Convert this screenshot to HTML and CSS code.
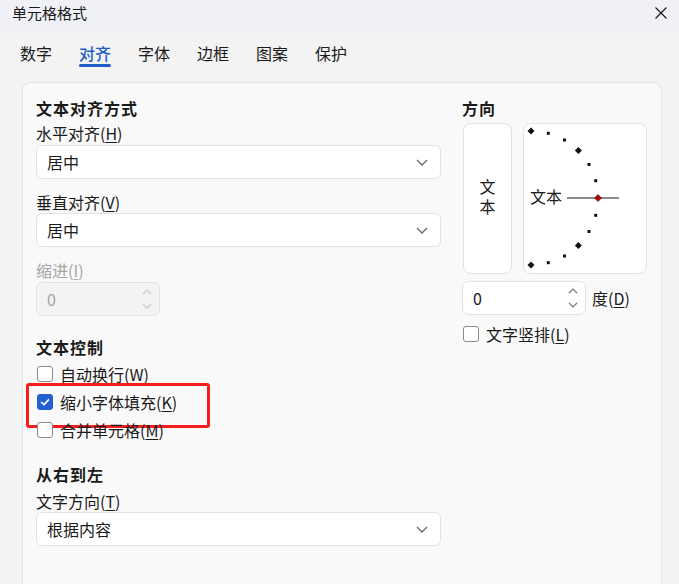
FILE: index.html
```html
<!DOCTYPE html>
<html lang="zh-CN">
<head>
    <meta charset="UTF-8">
    <title>单元格格式</title>
    <link rel="stylesheet" href="styles.css">
</head>
<body>
    <div class="dialog">
        <div class="dlg-title">
            <span>单元格格式</span>
            <svg class="dlg-close" width="12" height="12" viewBox="0 0 12 12">
                <path d="M0.5 0.5L11.5 11.5M11.5 0.5L0.5 11.5" stroke="#1a1a1a" stroke-width="1.2" fill="none"/>
            </svg>
        </div>
        <ul class="tabs">
            <li>数字</li>
            <li class="tab-on">对齐</li>
            <li>字体</li>
            <li>边框</li>
            <li>图案</li>
            <li>保护</li>
        </ul>
        <div class="panel">
            <div class="col-left">
                <h3 class="sec">文本对齐方式</h3>
                <p class="lbl lbl-first">水平对齐(<u>H</u>)</p>
                <div class="select">
                    <span>居中</span>
                    <svg width="12" height="7" viewBox="0 0 12 7"><path d="M1 1L6 6L11 1" stroke="#666" stroke-width="1.3" fill="none"/></svg>
                </div>
                <p class="lbl">垂直对齐(<u>V</u>)</p>
                <div class="select">
                    <span>居中</span>
                    <svg width="12" height="7" viewBox="0 0 12 7"><path d="M1 1L6 6L11 1" stroke="#666" stroke-width="1.3" fill="none"/></svg>
                </div>
                <p class="lbl lbl-off">缩进(<u>I</u>)</p>
                <div class="spin spin-off">
                    <span>0</span>
                    <svg width="10" height="20" viewBox="0 0 10 20"><path d="M1 5L5 1L9 5M1 15L5 19L9 15" stroke="#c8c8c8" stroke-width="1.2" fill="none"/></svg>
                </div>

                <h3 class="sec sec-gap">文本控制</h3>
                <div class="checks">
                    <label class="chk"><i class="box"></i>自动换行(<u>W</u>)</label>
                    <label class="chk chk-mark">
                        <i class="box box-on">
                            <svg width="10" height="8" viewBox="0 0 10 8"><path d="M1 4L4 6.6L9 1.4" stroke="#fff" stroke-width="1.6" fill="none"/></svg>
                        </i>缩小字体填充(<u>K</u>)
                    </label>
                    <label class="chk"><i class="box"></i>合并单元格(<u>M</u>)</label>
                </div>

                <h3 class="sec sec-gap2">从右到左</h3>
                <p class="lbl lbl-first2">文字方向(<u>T</u>)</p>
                <div class="select">
                    <span>根据内容</span>
                    <svg width="12" height="7" viewBox="0 0 12 7"><path d="M1 1L6 6L11 1" stroke="#666" stroke-width="1.3" fill="none"/></svg>
                </div>
            </div>

            <div class="col-right">
                <h3 class="sec">方向</h3>
                <div class="orient">
                    <div class="vert-box">
                        <span class="vert-txt">文本</span>
                    </div>
                    <div class="dial-box">
                        <svg width="122" height="149" viewBox="0 0 122 149">
                            <text x="6" y="79" class="dial-txt">文本</text>
                            <line x1="43" y1="74" x2="95" y2="74" stroke="#8c8c8c" stroke-width="2"/>
                            <g fill="#111">
                                <polygon points="7,3.5 10.5,7 7,10.5 3.5,7"/>
                                <rect x="22.8" y="7.8" width="3" height="3"/>
                                <rect x="39" y="14.5" width="3" height="3"/>
                                <polygon points="54.4,23.1 57.9,26.6 54.4,30.1 50.9,26.6"/>
                                <rect x="63.5" y="39" width="3" height="3"/>
                                <rect x="70.2" y="55.2" width="3" height="3"/>
                                <rect x="70.2" y="89.8" width="3" height="3"/>
                                <rect x="63.5" y="106" width="3" height="3"/>
                                <polygon points="54.4,117.9 57.9,121.4 54.4,124.9 50.9,121.4"/>
                                <rect x="39" y="130.5" width="3" height="3"/>
                                <rect x="22.8" y="137.2" width="3" height="3"/>
                                <polygon points="7,137.5 10.5,141 7,144.5 3.5,141"/>
                            </g>
                            <polygon points="74,70.5 77.5,74 74,77.5 70.5,74" fill="#c00000" stroke="#222" stroke-width="0.6"/>
                        </svg>
                    </div>
                </div>
                <div class="deg-row">
                    <div class="spin">
                        <span>0</span>
                        <svg width="10" height="20" viewBox="0 0 10 20"><path d="M1 5L5 1L9 5M1 15L5 19L9 15" stroke="#777" stroke-width="1.2" fill="none"/></svg>
                    </div>
                    <span class="deg-lbl">度(<u>D</u>)</span>
                </div>
                <label class="chk chk-vert"><i class="box"></i>文字竖排(<u>L</u>)</label>
            </div>
        </div>
    </div>
</body>
</html>
```

FILE: styles.css
```css
* {
    box-sizing: border-box;
}

html, body {
    margin: 0;
    height: 100%;
    overflow: hidden;
}

body {
    font-family: "Noto Sans CJK SC", "Noto Sans", sans-serif;
    font-size: 16px;
    color: #1a1a1a;
    background-color: #f3f3f3;
}

p, h3, ul {
    margin: 0;
    padding: 0;
}

u {
    text-underline-offset: 2px;
}

.dialog {
    width: 679px;
    height: 584px;
}

.dlg-title {
    display: flex;
    justify-content: space-between;
    align-items: flex-start;
    height: 31px;
    padding: 3px 12px 0 12px;
    line-height: 20px;
    font-size: 15px;
    background-color: #eff1f6;
}

.dlg-close {
    margin-top: 4px;
}

.tabs {
    display: flex;
    gap: 27px;
    padding: 12px 0 0 20px;
    list-style: none;
}

.tabs>li {
    position: relative;
    padding-bottom: 4px;
    line-height: 20px;
    font-size: 16px;
    color: #1a1a1a;
}

.tabs>.tab-on {
    color: #1f5dc9;
    font-weight: 500;
}

.tabs>.tab-on:after {
    content: "";
    position: absolute;
    left: 0;
    right: 0;
    bottom: 0;
    height: 3px;
    border-radius: 2px;
    background-color: #1f5dc9;
}

.panel {
    display: flex;
    gap: 21px;
    height: 530px;
    margin: 15px 17px 0 22px;
    padding: 15px 13px 0;
    border: 1px solid #e4e4e4;
    border-radius: 8px;
    background-color: #f9f9f9;
}

.col-left {
    width: 405px;
}

.col-right {
    width: 185px;
}

.sec {
    line-height: 20px;
    font-size: 16px;
    font-weight: bold;
    letter-spacing: 1px;
}

.sec-gap {
    margin-top: 21px;
}

.sec-gap2 {
    margin-top: 20px;
}

.lbl {
    margin-top: 13px;
    line-height: 20px;
}

.lbl-first {
    margin-top: 5px;
}

.lbl-first2 {
    margin-top: 7px;
}

.lbl-off {
    color: #a6a6a6;
}

.select {
    display: flex;
    justify-content: space-between;
    align-items: center;
    height: 34px;
    margin-top: 1px;
    padding: 0 12px 0 10px;
    border: 1px solid #e2e2e2;
    border-radius: 6px;
    background-color: #fff;
}

.lbl-first + .select {
    margin-top: 2px;
}

.spin {
    display: flex;
    justify-content: space-between;
    align-items: center;
    width: 124px;
    height: 34px;
    padding: 0 7px 0 10px;
    border: 1px solid #e2e2e2;
    border-radius: 6px;
    background-color: #fff;
}

.spin-off {
    margin-top: 2px;
    color: #a6a6a6;
    background-color: #f3f3f3;
}

.checks {
    margin-top: 3px;
}

.chk {
    position: relative;
    display: flex;
    align-items: center;
    height: 28px;
}

.box {
    display: flex;
    justify-content: center;
    align-items: center;
    width: 16px;
    height: 16px;
    margin: 0 7px 0 1px;
    border: 1px solid #8a8a8a;
    border-radius: 3px;
    background-color: #fff;
}

.box-on {
    border-color: #235fcf;
    background-color: #235fcf;
}

.chk-mark:after {
    content: "";
    position: absolute;
    top: -5px;
    left: -10px;
    width: 178px;
    height: 39px;
    border: 3px solid #f51d1d;
    border-radius: 3px;
}

.orient {
    display: flex;
    gap: 11px;
    height: 151px;
    margin-top: 5px;
}

.vert-box {
    display: flex;
    justify-content: center;
    align-items: center;
    width: 50px;
    margin-left: 1px;
    border: 1px solid #e2e2e2;
    border-radius: 8px;
    background-color: #fff;
}

.vert-txt {
    writing-mode: vertical-rl;
    letter-spacing: 4px;
    line-height: 20px;
}

.dial-box {
    width: 124px;
    border: 1px solid #e2e2e2;
    border-radius: 8px;
    background-color: #fff;
}

.dial-box>svg {
    display: block;
}

.dial-txt {
    font-family: "Noto Sans CJK SC", sans-serif;
    font-size: 16px;
    fill: #1a1a1a;
}

.deg-row {
    display: flex;
    align-items: center;
    gap: 6px;
    margin-top: 7px;
}

.chk-vert {
    margin-top: 5px;
}
```
